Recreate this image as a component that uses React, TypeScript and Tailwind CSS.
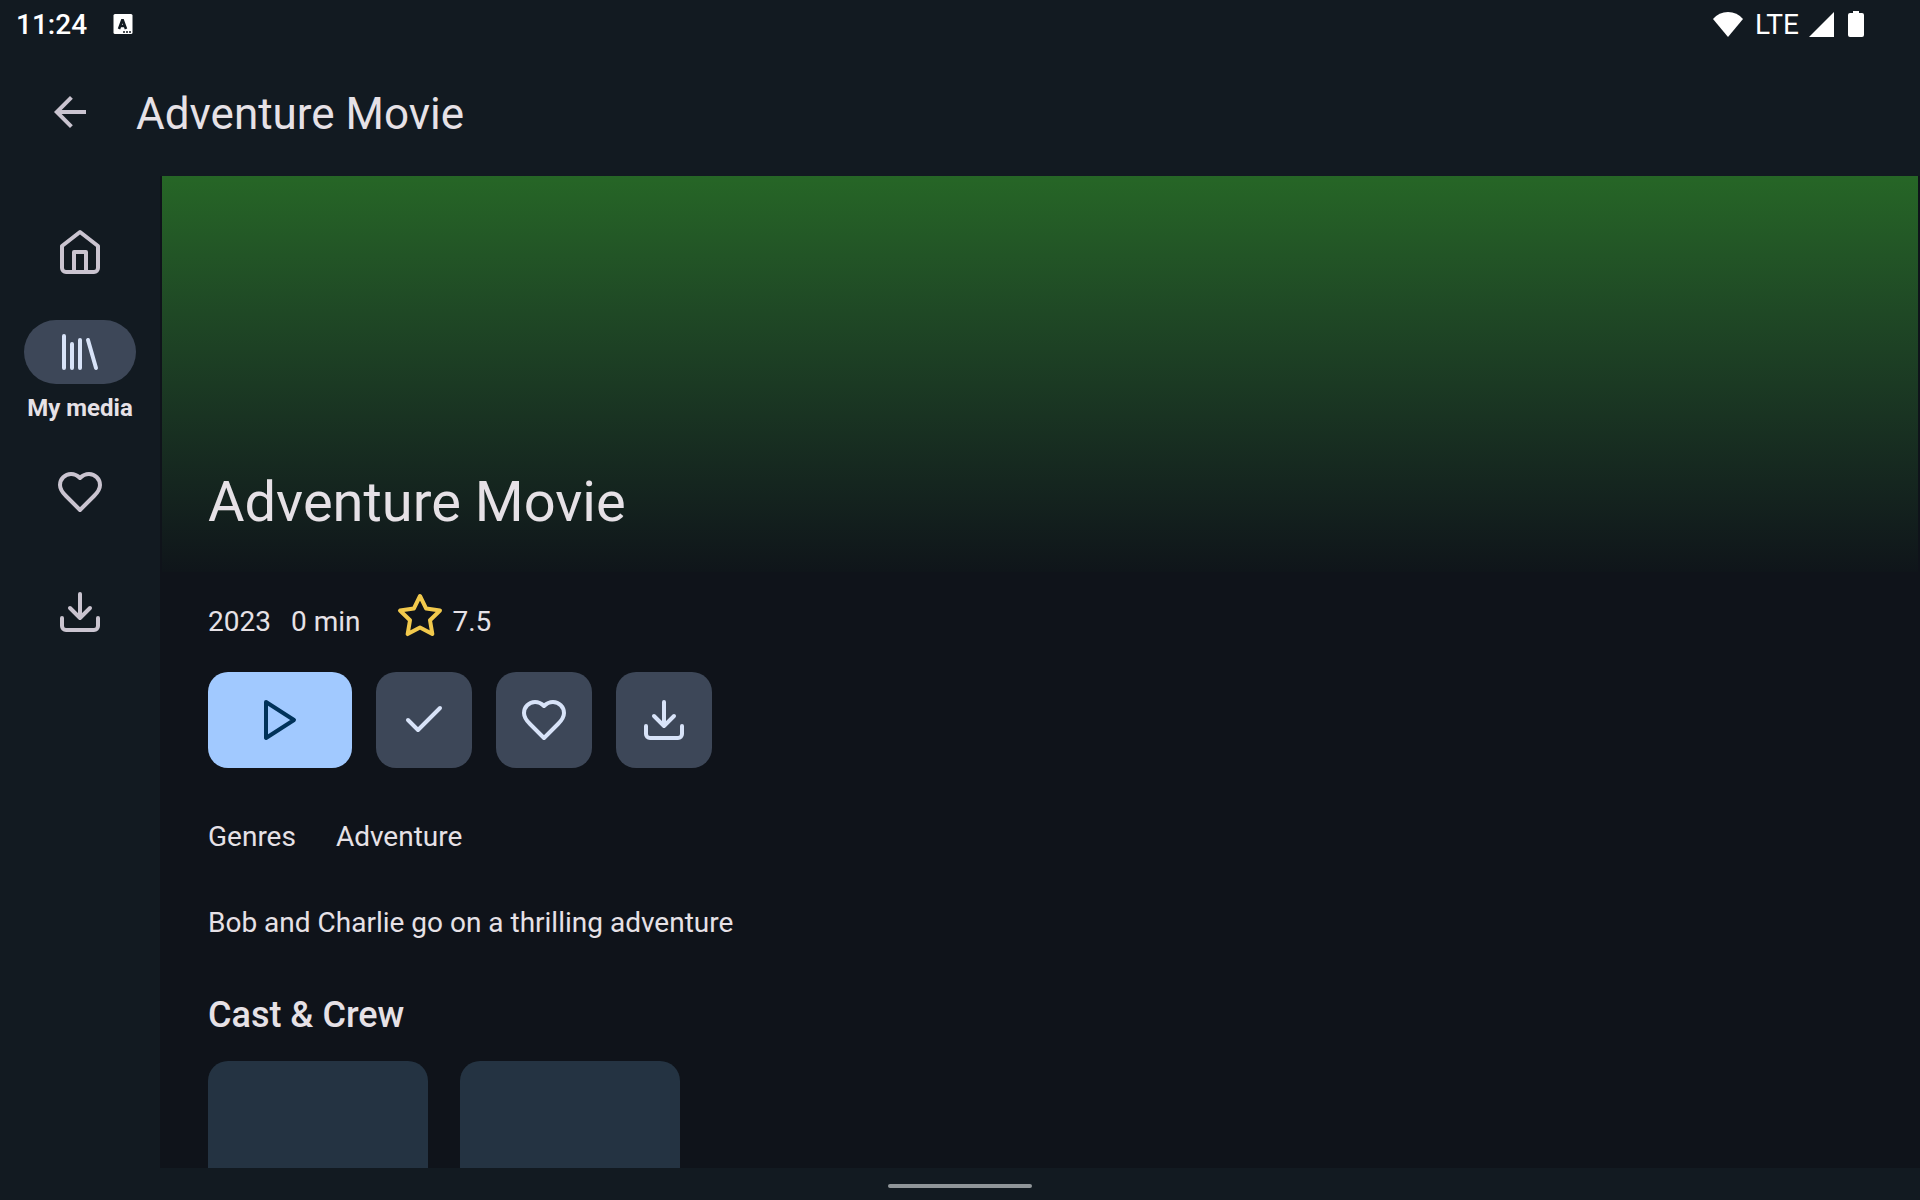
import type { ReactNode } from "react";

function Icon({ children }: { children: ReactNode }) {
  return (
    <svg
      viewBox="0 0 24 24"
      className="size-12 shrink-0"
      fill="none"
      stroke="currentColor"
      strokeWidth="2"
      strokeLinecap="round"
      strokeLinejoin="round"
      aria-hidden="true"
    >
      {children}
    </svg>
  );
}

const HomeIcon = () => (
  <Icon>
    <path d="m3 9 9-7 9 7v11a2 2 0 0 1-2 2H5a2 2 0 0 1-2-2z" />
    <path d="M9 22V12h6v10" />
  </Icon>
);
const LibraryIcon = () => (
  <Icon>
    <path d="m16 6 4 14M12 6v14M8 8v12M4 4v16" />
  </Icon>
);
const HeartIcon = () => (
  <Icon>
    <path d="M19 14c1.49-1.46 3-3.21 3-5.5A5.5 5.5 0 0 0 16.5 3c-1.76 0-3 .5-4.5 2-1.5-1.5-2.74-2-4.5-2A5.5 5.5 0 0 0 2 8.5c0 2.3 1.5 4.05 3 5.5l7 7Z" />
  </Icon>
);
const DownloadIcon = () => (
  <Icon>
    <path d="M21 15v4a2 2 0 0 1-2 2H5a2 2 0 0 1-2-2v-4M7 10l5 5 5-5M12 15V3" />
  </Icon>
);
const PlayIcon = () => (
  <Icon>
    <path d="m5 3 14 9-14 9z" />
  </Icon>
);
const CheckIcon = () => (
  <Icon>
    <path d="M20 6 9 17l-5-5" />
  </Icon>
);
const StarIcon = () => (
  <Icon>
    <path d="m12 2 3.09 6.26L22 9.27l-5 4.87 1.18 6.88L12 17.77l-6.18 3.25L7 14.14 2 9.27l6.91-1.01z" />
  </Icon>
);

function StatusBar() {
  return (
    <div className="flex h-12 items-center justify-between pl-4 pr-14 text-white">
      <div className="flex items-center gap-[26px]">
        <span className="pt-0.5 text-[28px] leading-11 font-medium">11:24</span>
        <svg viewBox="0 0 20 20" className="size-5" aria-hidden="true">
          <rect width="19" height="20" x="0.5" rx="1.5" fill="#fff" />
          <path
            d="M6 15 9.5 5.5 13 15M7 12h5"
            fill="none"
            stroke="#121a21"
            strokeWidth="2.6"
            strokeLinejoin="bevel"
          />
          <path d="M10 18h2M13 18h2M16 18h2" stroke="#121a21" strokeWidth="1.6" />
        </svg>
      </div>
      <div className="flex items-center">
        <svg viewBox="0 0 30 25" className="mr-3 h-[25px] w-[30px]" aria-hidden="true">
          <path d="M15 25 0 7Q6 0 15 0t15 7z" fill="#fff" />
        </svg>
        <span className="pt-0.5 text-[28px] leading-11">LTE</span>
        <svg viewBox="0 0 25 25" className="ml-2.5 size-[25px]" aria-hidden="true">
          <path d="M25 0v25H0z" fill="#fff" />
        </svg>
        <svg viewBox="0 0 16 26" className="ml-3.5 h-[26px] w-4" aria-hidden="true">
          <path
            d="M5 0h6v2h3a2 2 0 0 1 2 2v20a2 2 0 0 1-2 2H2a2 2 0 0 1-2-2V4a2 2 0 0 1 2-2h3z"
            fill="#fff"
          />
        </svg>
      </div>
    </div>
  );
}

function TopBar() {
  return (
    <header className="flex h-32 items-center gap-8 pl-[46px] text-[#e6e1e6]">
      <button type="button" aria-label="Back" className="flex h-14 w-[58px] items-center text-[#cac4d0]">
        <svg viewBox="0 0 24 24" className="size-12" fill="currentColor" aria-hidden="true">
          <path d="M20 11H7.83l5.59-5.59L12 4l-8 8 8 8 1.41-1.41L7.83 13H20z" />
        </svg>
      </button>
      <h1 className="pt-1 text-[44px] leading-14">Adventure Movie</h1>
    </header>
  );
}

function NavItem({ label, children }: { label: string; children: ReactNode }) {
  return (
    <a href="#" aria-label={label} className="flex h-28 items-center justify-center">
      {children}
    </a>
  );
}

function NavRail() {
  return (
    <nav className="flex w-40 shrink-0 flex-col gap-2 pt-5 text-[#cac4d0]">
      <NavItem label="Home">
        <HomeIcon />
      </NavItem>
      <a href="#" aria-current="page" className="flex h-28 flex-col items-center gap-2 pt-1">
        <span className="flex h-16 w-28 shrink-0 items-center justify-center rounded-full bg-[#3d4758] text-[#d8e3f8]">
          <LibraryIcon />
        </span>
        <span className="text-2xl font-bold whitespace-nowrap text-[#e6e1e6]">My media</span>
      </a>
      <NavItem label="Favorites">
        <HeartIcon />
      </NavItem>
      <NavItem label="Downloads">
        <DownloadIcon />
      </NavItem>
    </nav>
  );
}

function ActionButton({ label, children }: { label: string; children: ReactNode }) {
  return (
    <button
      type="button"
      aria-label={label}
      className="flex size-24 items-center justify-center rounded-[20px] bg-[#3d4758] text-[#d8e3f8]"
    >
      {children}
    </button>
  );
}

function Details() {
  return (
    <div className="flex flex-col px-12 pt-5 text-[28px] leading-9">
      <div className="mb-8 flex items-end">
        <span className="mr-5">2023</span>
        <span className="mr-9">0 min</span>
        <span className="mr-2 text-[#f2c94c]">
          <StarIcon />
        </span>
        <span>7.5</span>
      </div>
      <div className="flex gap-6">
        <button
          type="button"
          aria-label="Play"
          className="flex h-24 w-36 items-center justify-center rounded-[20px] bg-[#a1c9ff] text-[#00325a]"
        >
          <PlayIcon />
        </button>
        <ActionButton label="Mark as played">
          <CheckIcon />
        </ActionButton>
        <ActionButton label="Add to favorites">
          <HeartIcon />
        </ActionButton>
        <ActionButton label="Download">
          <DownloadIcon />
        </ActionButton>
      </div>
      <dl className="mt-[51px] flex gap-10">
        <dt>Genres</dt>
        <dd>Adventure</dd>
      </dl>
      <p className="mt-[50px]">Bob and Charlie go on a thrilling adventure</p>
      <h3 className="mt-[50px] text-4xl leading-12 font-medium">Cast &amp; Crew</h3>
      <ul className="mt-[22px] flex gap-8">
        <li className="h-80 w-[220px] rounded-t-[20px] bg-[#243342]" />
        <li className="h-80 w-[220px] rounded-t-[20px] bg-[#243342]" />
      </ul>
    </div>
  );
}

export default function App() {
  return (
    <div className="flex h-screen flex-col overflow-hidden bg-[#121a21] font-[Roboto,sans-serif]">
      <StatusBar />
      <TopBar />
      <div className="flex min-h-0 flex-1">
        <NavRail />
        <main className="min-w-0 flex-1 overflow-hidden bg-[#0f131a] text-[#e6e1e6]">
          <section className="mx-0.5 flex h-[396px] items-end bg-linear-to-b from-[#266626] to-[#0f151a] px-[46px] pb-[34px]">
            <h2 className="text-[56px] leading-18">Adventure Movie</h2>
          </section>
          <Details />
        </main>
      </div>
      <footer className="flex h-8 shrink-0 items-center justify-center pt-1">
        <div className="h-1 w-36 rounded-full bg-[#909599]" />
      </footer>
    </div>
  );
}
